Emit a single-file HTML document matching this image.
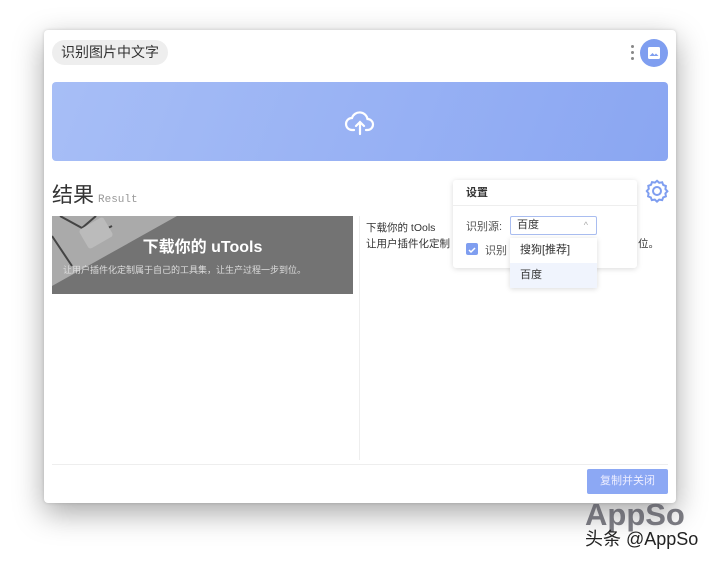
<!DOCTYPE html>
<html><head><meta charset="utf-8"><style>
*{box-sizing:border-box;margin:0;padding:0}
body{width:720px;height:562px;background:#fff;position:relative;overflow:hidden;font-family:"Liberation Sans","Noto Sans CJK SC",sans-serif;color:#333}
.win{position:absolute;left:44px;top:30px;width:632px;height:473px;background:#fff;border-radius:4px;box-shadow:0 10px 30px rgba(0,0,0,.35),0 0 3px rgba(0,0,0,.15)}
.tag{position:absolute;left:8px;top:10px;height:25px;padding:0 9px;border-radius:13px;background:#eeeeee;font-size:14px;line-height:25px;color:#333}
.dots{position:absolute;left:587px;top:15px;width:3px}
.dots i{display:block;width:3px;height:3px;background:#888;border-radius:50%;margin-bottom:3px}
.av{position:absolute;left:596px;top:9px;width:28px;height:28px;border-radius:50%;background:#7f9ef0}
.up{position:absolute;left:8px;top:52px;width:616px;height:79px;border-radius:4px;background:linear-gradient(110deg,#a7bef6,#8aa6f2)}
.h{position:absolute;left:8px;top:149px;font-size:21px;color:#333}
.h small{font-family:"Liberation Mono",monospace;font-size:11px;color:#999;margin-left:4px}
.img{position:absolute;left:8px;top:186px;width:301px;height:78px;background:#737373;overflow:hidden}
.img .t1{position:absolute;left:0;width:100%;top:17px;text-align:center;color:#fff;font-size:16px;font-weight:bold}
.img .t2{position:absolute;left:11px;top:47px;color:#ddd;font-size:9px}
.vl{position:absolute;left:315px;top:186px;width:1px;height:244px;background:#eee}
.txt{position:absolute;left:322px;top:190px;font-size:10.5px;line-height:16px;color:#333}
.hl{position:absolute;left:8px;top:434px;width:616px;height:1px;background:#eee}
.btn{position:absolute;left:543px;top:439px;width:81px;height:25px;background:#8ca8f4;border-radius:2px;color:#eef;font-size:11px;text-align:center;line-height:25px}
.pop{position:absolute;left:409px;top:150px;width:184px;height:88px;background:#fff;border-radius:3px;box-shadow:0 1px 6px rgba(0,0,0,.15)}
.pop .ph{height:26px;border-bottom:1px solid #eee;padding-left:13px;line-height:26px;font-size:11px;font-weight:bold;color:#333}
.sel{position:absolute;left:466px;top:186px;width:87px;height:19px;border:1px solid #a9bdf0;border-radius:2px;background:#fff;font-size:11px;line-height:17px;padding-left:6px}
.dd{position:absolute;left:466px;top:208px;width:87px;height:50px;background:#fff;box-shadow:0 1px 5px rgba(0,0,0,.15);font-size:11px}
.dd div{height:25px;line-height:25px;padding-left:10px}
</style></head><body>
<div class="win">
<div class="tag">识别图片中文字</div>
<div class="dots"><i></i><i></i><i></i></div>
<div class="av"><svg width="28" height="28"><rect x="8" y="8" width="12" height="12" rx="1.5" fill="#fff"/><path d="M9.5 17l3-3 2 2 1.5-1.5 2.5 2.5z" fill="#7f9ef0"/></svg></div>
<div class="up"><svg style="position:absolute;left:290px;top:25px" width="36" height="30" viewBox="0 0 36 30"><path d="M12 23h-2a6 6 0 0 1 0-12 8 8 0 0 1 15.5 1 5.5 5.5 0 0 1 0 11H24" fill="none" stroke="#fff" stroke-width="2.2" stroke-linecap="round"/><path d="M18 27V15m-4 4 4-4 4 4" fill="none" stroke="#fff" stroke-width="2.2" stroke-linecap="round"/></svg></div>
<div class="h">结果<small>Result</small></div>
<svg style="position:absolute;left:601px;top:149px" width="24" height="24" viewBox="0 0 24 24"><path d="M12 1.8l2.2 2 3-.5 1 2.7 2.7 1-.5 3 2 2.2-2 2.2.5 3-2.7 1-1 2.7-3-.5-2.2 2-2.2-2-3 .5-1-2.7-2.7-1 .5-3L1.8 12l2-2.2-.5-3 2.7-1 1-2.7 3 .5z" fill="none" stroke="#7f9ef0" stroke-width="2"/><circle cx="12" cy="12" r="4" fill="none" stroke="#7f9ef0" stroke-width="2"/></svg>
<div class="img">
<svg style="position:absolute;left:0;top:0" width="130" height="78"><path d="M0 0h125L0 70z" fill="#aaa"/><path d="M8 0l22 12 14-12M0 20l20 30M40 20l20-10" stroke="#444" stroke-width="2" fill="none"/><rect x="30" y="6" width="28" height="22" rx="3" fill="#bbb" transform="rotate(-30 44 17)"/></svg>
<div class="t1">下载你的 uTools</div>
<div class="t2">让用户插件化定制属于自己的工具集，让生产过程一步到位。</div>
</div>
<div class="vl"></div>
<div class="txt">下载你的 tOols<br>让用户插件化定制</div>
<div style="position:absolute;left:594px;top:206px;font-size:10.5px;color:#333">位。</div>
<div class="pop"><div class="ph">设置</div>
<div style="position:absolute;left:13px;top:38px;font-size:11px;color:#555">识别源:</div>
<div style="position:absolute;left:13px;top:63px;width:12px;height:12px;background:#7f9ef0;border-radius:2px"><svg width="12" height="12"><path d="M3 6l2 2 4-4" stroke="#fff" stroke-width="1.5" fill="none"/></svg></div>
<div style="position:absolute;left:32px;top:62px;font-size:11px;color:#555">识别</div>
</div>
<div class="sel">百度<span style="position:absolute;right:8px;color:#aaa;font-size:9px">^</span></div>
<div class="dd"><div>搜狗[推荐]</div><div style="background:#f0f4fd">百度</div></div>
<div class="hl"></div>
<div class="btn">复制并关闭</div>
</div>
<div style="position:absolute;left:585px;top:497px;font-size:31px;font-weight:bold;color:rgba(80,80,90,.75);letter-spacing:0">AppSo</div>
<div style="position:absolute;left:585px;top:525px;font-size:18px;color:#222">头条 @AppSo</div>
</body></html>
